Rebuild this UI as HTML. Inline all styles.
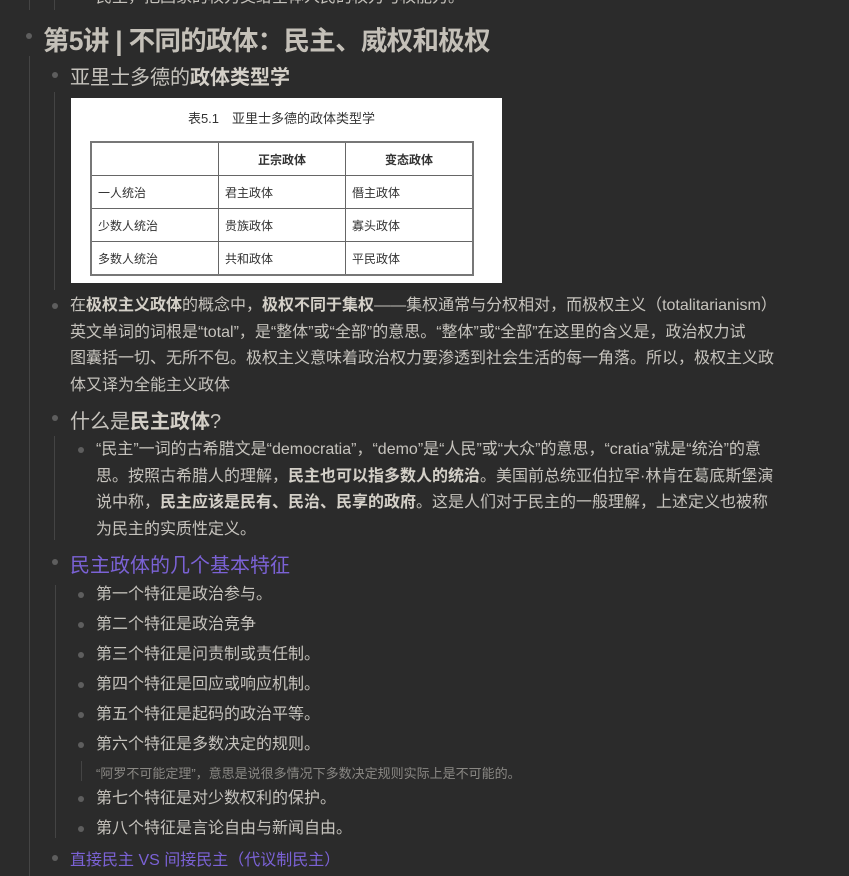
<!DOCTYPE html>
<html><head><meta charset="utf-8"><style>
body{margin:0;width:849px;height:876px;background:#2b2b2b;overflow:hidden;position:relative;font-family:"Liberation Sans","Noto Sans CJK SC",sans-serif;color:#c6c3bd}
.a{position:absolute;white-space:nowrap}
.v{position:absolute;width:1px;background:#444}
.b{position:absolute;width:6px;height:6px;border-radius:50%;background:#5e5e5e}
b{color:#d4d0c8}
.p{color:#7b62d6}
.t{font-size:16px;line-height:26.5px}
table{border-collapse:collapse;font-size:12px;color:#333}
td{border:1px solid #666;height:32px;padding:0 6px;width:114px}
</style></head><body>
<div class="v" style="left:29px;top:0;height:10px"></div>
<div class="v" style="left:54px;top:0;height:10px"></div>
<div class="a" style="left:96px;top:-17px;font-size:16px;color:#c6c3bd">民主，把国家的权力交给全体人民的权力与权能力。</div>
<div class="b" style="left:26px;top:33px"></div>
<div class="a" style="left:43px;top:19px;font-size:26.5px;letter-spacing:-0.7px;font-weight:bold;color:#c4c0b8">第5讲 | 不同的政体：民主、威权和极权</div>
<div class="v" style="left:29px;top:56px;height:820px"></div>
<div class="b" style="left:52px;top:72px"></div>
<div class="a" style="left:70px;top:61px;font-size:20px">亚里士多德的<b>政体类型学</b></div>
<div class="v" style="left:54px;top:92px;height:198px"></div>
<div class="a" style="left:71px;top:98px;width:431px;height:185px;background:#fff">
<div class="a" style="left:0;width:421px;text-align:center;top:10px;font-size:13px;color:#333">表5.1　亚里士多德的政体类型学</div>
<table style="position:absolute;left:19px;top:43px;border:2px solid #777">
<tr><td></td><td style="text-align:center;font-weight:bold">正宗政体</td><td style="text-align:center;font-weight:bold">变态政体</td></tr>
<tr><td>一人统治</td><td>君主政体</td><td>僭主政体</td></tr>
<tr><td>少数人统治</td><td>贵族政体</td><td>寡头政体</td></tr>
<tr><td>多数人统治</td><td>共和政体</td><td>平民政体</td></tr>
</table></div>
<div class="b" style="left:52px;top:303px"></div>
<div class="a t" style="left:70px;top:293px">在<b>极权主义政体</b>的概念中，<b>极权不同于集权</b>——集权通常与分权相对，而极权主义（totalitarianism）<br>英文单词的词根是“total”，是“整体”或“全部”的意思。“整体”或“全部”在这里的含义是，政治权力试<br>图囊括一切、无所不包。极权主义意味着政治权力要渗透到社会生活的每一角落。所以，极权主义政<br>体又译为全能主义政体</div>
<div class="b" style="left:52px;top:415px"></div>
<div class="a" style="left:70px;top:405px;font-size:20px">什么是<b>民主政体</b>?</div>
<div class="v" style="left:54px;top:436px;height:104px"></div>
<div class="b" style="left:78px;top:447px"></div>
<div class="a t" style="left:96px;top:437px">“民主”一词的古希腊文是“democratia”，“demo”是“人民”或“大众”的意思，“cratia”就是“统治”的意<br>思。按照古希腊人的理解，<b>民主也可以指多数人的统治</b>。美国前总统亚伯拉罕·林肯在葛底斯堡演<br>说中称，<b>民主应该是民有、民治、民享的政府</b>。这是人们对于民主的一般理解，上述定义也被称<br>为民主的实质性定义。</div>
<div class="b" style="left:52px;top:559px"></div>
<div class="a p" style="left:70px;top:549px;font-size:20px">民主政体的几个基本特征</div>
<div class="v" style="left:55px;top:585px;height:253px"></div>
<div class="b" style="left:78px;top:592px"></div><div class="a t" style="left:96px;top:582px">第一个特征是政治参与。</div>
<div class="b" style="left:78px;top:622px"></div><div class="a t" style="left:96px;top:612px">第二个特征是政治竞争</div>
<div class="b" style="left:78px;top:652px"></div><div class="a t" style="left:96px;top:642px">第三个特征是问责制或责任制。</div>
<div class="b" style="left:78px;top:682px"></div><div class="a t" style="left:96px;top:672px">第四个特征是回应或响应机制。</div>
<div class="b" style="left:78px;top:712px"></div><div class="a t" style="left:96px;top:702px">第五个特征是起码的政治平等。</div>
<div class="b" style="left:78px;top:742px"></div><div class="a t" style="left:96px;top:732px">第六个特征是多数决定的规则。</div>
<div class="v" style="left:81px;top:761px;height:20px"></div>
<div class="a" style="left:96px;top:763px;font-size:13px;color:#8a8884">“阿罗不可能定理”，意思是说很多情况下多数决定规则实际上是不可能的。</div>
<div class="b" style="left:78px;top:796px"></div><div class="a t" style="left:96px;top:786px">第七个特征是对少数权利的保护。</div>
<div class="b" style="left:78px;top:826px"></div><div class="a t" style="left:96px;top:816px">第八个特征是言论自由与新闻自由。</div>
<div class="b" style="left:52px;top:855px"></div>
<div class="a p" style="left:70px;top:846px;font-size:16px">直接民主 VS 间接民主（代议制民主）</div>
</body></html>
